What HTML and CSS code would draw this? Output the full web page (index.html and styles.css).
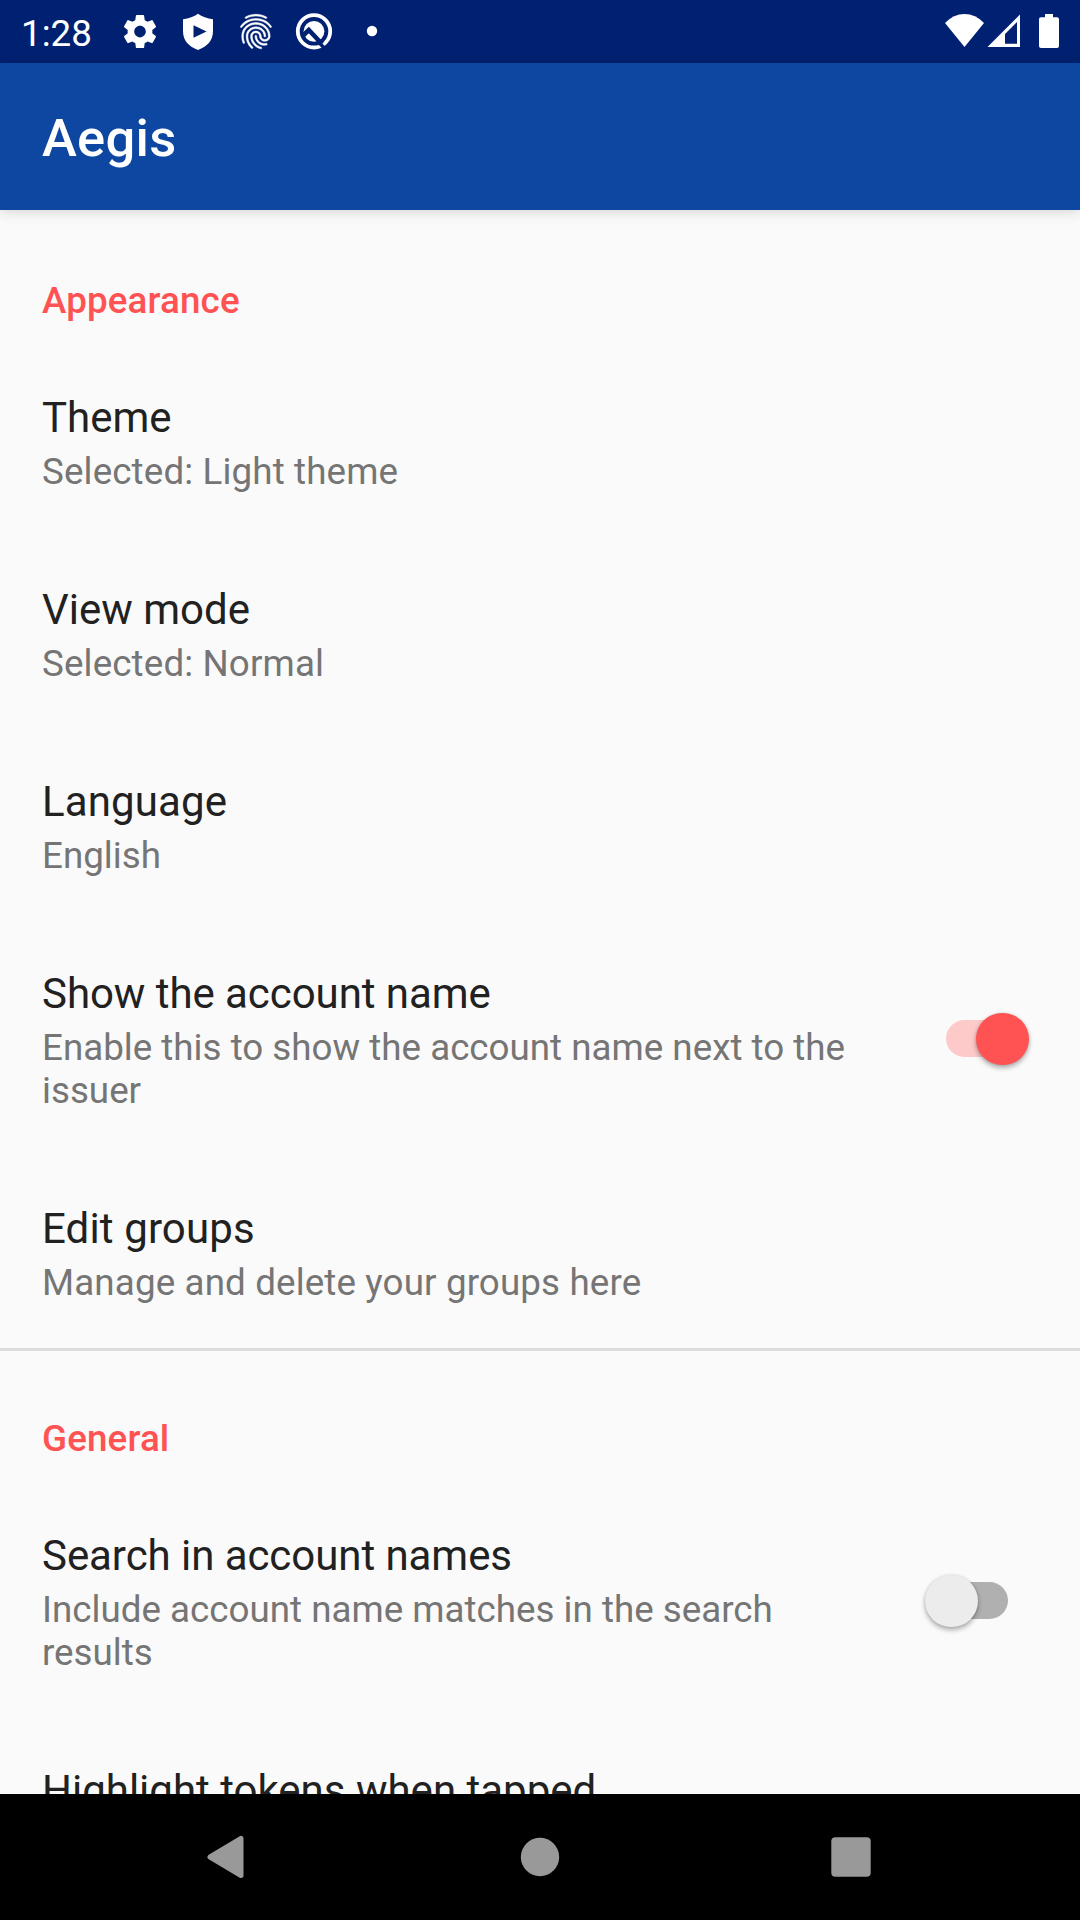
FILE: index.html
```html
<!DOCTYPE html>
<html lang="en">
<head>
<meta charset="utf-8">
<title>Aegis</title>
<link rel="stylesheet" href="styles.css">
</head>
<body>
<div class="screen">
  <div class="status-bar">
    <span class="clock">1:28</span>
    <svg class="notifications" width="260" height="63" viewBox="120 0 260 63" fill="#fff">
      <path transform="translate(120.2 11.8) scale(1.65)" d="M19.43 12.98c.04-.32.07-.64.07-.98s-.03-.66-.07-.98l2.11-1.65c.19-.15.24-.42.12-.64l-2-3.46c-.12-.22-.39-.3-.61-.22l-2.49 1c-.52-.4-1.08-.73-1.69-.98l-.38-2.65A.488.488 0 0 0 14 2h-4c-.25 0-.46.18-.49.42l-.38 2.65c-.61.25-1.17.59-1.69.98l-2.49-1c-.23-.09-.49 0-.61.22l-2 3.46c-.13.22-.07.49.12.64l2.11 1.65c-.04.32-.07.65-.07.98s.03.66.07.98l-2.11 1.65c-.19.15-.24.42-.12.64l2 3.46c.12.22.39.3.61.22l2.49-1c.52.4 1.08.73 1.69.98l.38 2.65c.03.24.24.42.49.42h4c.25 0 .46-.18.49-.42l.38-2.65c.61-.25 1.17-.59 1.69-.98l2.49 1c.23.09.49 0 .61-.22l2-3.46c.12-.22.07-.49-.12-.64l-2.11-1.65zM12 15.5c-1.93 0-3.5-1.57-3.5-3.5s1.57-3.5 3.5-3.5 3.5 1.57 3.5 3.5-1.57 3.5-3.5 3.5z"/>
      <path fill-rule="evenodd" d="M198 13.7 Q204 17.8 213 19.2 V31 C213 41 207 46.5 198 50 C189 46.5 183 41 183 31 V19.2 Q192 17.8 198 13.7Z M193.5 25.2 V37.8 L206.5 31.5Z"/>
      <path transform="translate(235.2 10.8) scale(1.73)" stroke="#fff" stroke-width=".3" d="M17.81 4.47c-.08 0-.16-.02-.23-.06C15.66 3.42 14 3 12.01 3c-1.98 0-3.86.47-5.57 1.41-.24.13-.54.04-.68-.2-.13-.24-.04-.55.2-.68C7.82 2.52 9.86 2 12.01 2c2.13 0 3.99.47 6.03 1.52.25.13.34.43.21.67-.09.18-.26.28-.44.28zM3.5 9.72c-.1 0-.2-.03-.29-.09-.23-.16-.28-.47-.12-.7.99-1.4 2.25-2.5 3.75-3.27C9.98 4.04 14 4.03 17.15 5.65c1.5.77 2.76 1.86 3.75 3.25.16.22.11.54-.12.7-.23.16-.54.11-.7-.12-.9-1.26-2.04-2.25-3.39-2.94-2.87-1.47-6.54-1.47-9.4.01-1.36.7-2.5 1.7-3.4 2.96-.08.14-.23.21-.39.21zm6.25 12.07c-.13 0-.26-.05-.35-.15-.87-.87-1.34-1.43-2.01-2.64-.69-1.23-1.05-2.73-1.05-4.34 0-2.97 2.54-5.39 5.66-5.39s5.66 2.42 5.66 5.39c0 .28-.22.5-.5.5s-.5-.22-.5-.5c0-2.42-2.09-4.39-4.66-4.39-2.57 0-4.66 1.97-4.66 4.39 0 1.44.32 2.77.93 3.85.64 1.15 1.08 1.64 1.85 2.42.19.2.19.51 0 .71-.11.1-.24.15-.37.15zm7.17-1.85c-1.19 0-2.24-.3-3.1-.89-1.49-1.01-2.38-2.65-2.38-4.39 0-.28.22-.5.5-.5s.5.22.5.5c0 1.41.72 2.74 1.94 3.56.71.48 1.54.71 2.54.71.24 0 .64-.03 1.04-.1.27-.05.53.13.58.41.05.27-.13.53-.41.58-.57.11-1.07.12-1.21.12zM14.91 22c-.04 0-.09-.01-.13-.02-1.59-.44-2.63-1.03-3.72-2.1-1.4-1.39-2.17-3.24-2.17-5.22 0-1.62 1.38-2.94 3.08-2.94 1.7 0 3.08 1.32 3.08 2.94 0 1.07.93 1.94 2.08 1.94s2.08-.87 2.08-1.94c0-3.77-3.25-6.83-7.25-6.83-2.84 0-5.44 1.58-6.61 4.03-.39.81-.59 1.76-.59 2.8 0 .78.07 2.01.67 3.61.1.26-.03.55-.29.64-.26.1-.55-.04-.64-.29-.49-1.31-.73-2.61-.73-3.96 0-1.2.23-2.29.68-3.24 1.33-2.79 4.28-4.6 7.51-4.6 4.55 0 8.25 3.51 8.25 7.83 0 1.62-1.38 2.94-3.08 2.94s-3.08-1.32-3.08-2.94c0-1.07-.93-1.94-2.08-1.94s-2.08.87-2.08 1.94c0 1.71.66 3.31 1.87 4.51.95.94 1.86 1.46 3.27 1.85.27.07.42.35.35.61-.05.23-.26.38-.47.38z"/>
      <circle cx="314" cy="31.3" r="16.2" fill="none" stroke="#fff" stroke-width="3.8"/>
      <circle cx="314" cy="31.3" r="10.4"/>
      <path d="M302 36.5 L308.8 30 L322 44" fill="none" stroke="#002171" stroke-width="4.6"/>
      <path d="M319.5 43 L326 50" fill="none" stroke="#002171" stroke-width="3.4"/>
      <circle cx="372" cy="31" r="5.2"/>
    </svg>
    <svg class="system-icons" width="120" height="63" viewBox="940 0 120 63" fill="#fff">
      <path d="M964.5 47 L945 23 Q953.5 14 964.5 14 T984 23Z"/>
      <path fill-rule="evenodd" d="M987.5 47 L1020 14.5 V47Z M1005 34 V43.7 H1017 V22Z"/>
      <path d="M1045 14 H1053 V17.3 H1057 Q1059 17.3 1059 19.3 V46 Q1059 48 1057 48 H1041 Q1039 48 1039 46 V19.3 Q1039 17.3 1041 17.3 H1045Z"/>
    </svg>
  </div>
  <header class="toolbar"><h1 class="app-title">Aegis</h1></header>
  <main class="settings">
    <section class="group">
      <h2 class="category">Appearance</h2>
      <div class="row"><div class="label"><div class="title">Theme</div><div class="summary loose">Selected: Light theme</div></div></div>
      <div class="row"><div class="label"><div class="title">View mode</div><div class="summary loose">Selected: Normal</div></div></div>
      <div class="row"><div class="label"><div class="title loose">Language</div><div class="summary">English</div></div></div>
      <div class="row"><div class="label"><div class="title tight">Show the account name</div><div class="summary">Enable this to show the account name next to the issuer</div></div><div class="switch on"><div class="thumb"></div></div></div>
      <div class="row"><div class="label"><div class="title loose">Edit groups</div><div class="summary loose">Manage and delete your groups here</div></div></div>
    </section>
    <section class="group divided">
      <h2 class="category">General</h2>
      <div class="row"><div class="label"><div class="title tight">Search in account names</div><div class="summary">Include account name matches in the search results</div></div><div class="switch"><div class="thumb"></div></div></div>
      <div class="row"><div class="label"><div class="title">Highlight tokens when tapped</div></div></div>
    </section>
  </main>
  <nav class="nav-bar">
    <svg width="1080" height="126" viewBox="0 0 1080 126" fill="#999">
      <path d="M210 63 L241 44.5 V81.5Z" stroke="#999" stroke-width="5" stroke-linejoin="round"/>
      <circle cx="540" cy="63" r="19.2"/>
      <rect x="831.3" y="43.3" width="39.4" height="39.4" rx="4"/>
    </svg>
  </nav>
</div>
</body>
</html>
```
FILE: styles.css
```css
* { box-sizing: border-box; }

body {
  margin: 0;
  font-family: Roboto, sans-serif;
  background: #fafafa;
}

.screen {
  display: flex;
  flex-direction: column;
  width: 1080px;
  height: 1920px;
  overflow: hidden;
}

.status-bar {
  display: flex;
  flex: none;
  height: 63px;
  padding: 0 20px 0 21px;
  background: #002171;
  color: #fff;
}

.clock {
  width: 99px;
  padding-top: 12px;
  font-size: 36.75px;
  line-height: 43px;
}

.system-icons { margin-left: auto; }

.toolbar {
  display: flex;
  flex: none;
  align-items: center;
  height: 147px;
  padding: 3px 42px 0;
  background: #0d47a1;
  color: #fff;
  box-shadow: 0 2px 12px rgba(0, 0, 0, .15);
  z-index: 1;
}

.app-title {
  margin: 0;
  font-size: 52.5px;
  font-weight: 500;
  line-height: 62px;
  letter-spacing: .3px;
}

.settings {
  flex: 1;
  min-height: 0;
  overflow: hidden;
}

.divided { border-top: 3px solid #dcdcdc; }

.category {
  margin: 0;
  padding: 69px 42px 23px;
  font-size: 36.75px;
  font-weight: 500;
  line-height: 43px;
  letter-spacing: .14px;
  color: #ff5252;
}

.divided .category { padding-top: 66px; }

.row {
  display: flex;
  align-items: center;
  justify-content: space-between;
  padding: 48px 72px 44px 42px;
}

.label { max-width: 830px; }

.title {
  margin-bottom: 8px;
  font-size: 42px;
  line-height: 49px;
  color: #212121;
  white-space: nowrap;
}

.summary {
  font-size: 36.75px;
  line-height: 43px;
  color: #757575;
}

.loose { letter-spacing: .13px; }
.tight { letter-spacing: -.06px; }

.switch {
  position: relative;
  flex: none;
  width: 62px;
  height: 37px;
  margin-top: -4px;
  border-radius: 19px;
  background: #b0b0b0;
}

.switch.on { background: #fdc9c9; }

.thumb {
  position: absolute;
  top: -7.5px;
  left: -21px;
  width: 52.6px;
  height: 52.6px;
  border-radius: 50%;
  background: #ececec;
  box-shadow: 0 3px 5px rgba(0, 0, 0, .3), 0 0 3px rgba(0, 0, 0, .12);
}

.on .thumb {
  left: 30px;
  background: #ff5252;
}

.nav-bar {
  flex: none;
  height: 126px;
  background: #000;
}
```
